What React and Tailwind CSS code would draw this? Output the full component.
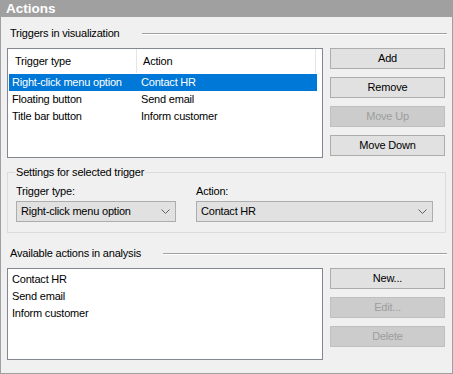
import React from "react";

function Btn({ children, disabled }) {
  return (
    <div
      className={
        "h-[21px] flex items-center justify-center border " +
        (disabled
          ? "bg-[#cccccc] border-[#bfbfbf] text-[#9d9d9d]"
          : "bg-[#e1e1e1] border-[#adadad] text-black")
      }
    >
      {children}
    </div>
  );
}

function SectionHeader({ children }) {
  return (
    <div className="h-[15px] flex items-center">
      <span className="pl-[3px] leading-[15px] whitespace-nowrap">{children}</span>
      <div className="flex-1 ml-[22px] h-[2px] border-t border-[#a0a0a0] border-b border-b-white"></div>
    </div>
  );
}

function Chevron() {
  return (
    <svg width="9" height="6" viewBox="0 0 9 6" className="shrink-0">
      <path d="M0.5 0.5 L4.5 4.5 L8.5 0.5" fill="none" stroke="#606060" strokeWidth="1" />
    </svg>
  );
}

function Combo({ value, width }) {
  return (
    <div
      className={
        "h-[21px] flex items-center justify-between border border-[#adadad] bg-[#e1e1e1] pl-[4px] pr-[5px] " +
        width
      }
    >
      <span className="whitespace-nowrap">{value}</span>
      <Chevron />
    </div>
  );
}

export default function App() {
  const rows = [
    ["Right-click menu option", "Contact HR", true],
    ["Floating button", "Send email", false],
    ["Title bar button", "Inform customer", false],
  ];
  return (
    <div className="w-[453px] h-[374px] bg-[#f0f0f0] border-x border-b border-[#a0a0a0] flex flex-col text-[11px] leading-[15px] tracking-[-0.2px] text-black font-['Liberation_Sans',Arial,sans-serif] overflow-hidden">
      <div className="h-[17px] bg-[#a0a0a0] text-white font-bold text-[13.5px] tracking-normal leading-[17px] pl-[5px] -mx-px">
        <span className="pl-px">Actions</span>
      </div>
      <div className="pl-[6px] pr-[5px] flex flex-col">
        <div className="mt-[9px]">
          <SectionHeader>Triggers in visualization</SectionHeader>
        </div>
        <div className="mt-[7px] flex gap-[7px]">
          <div className="w-[316px] h-[110px] border border-[#828790] bg-white flex flex-col">
            <div className="h-[25px] flex items-start">
              <div className="w-[129px] h-[24px] pl-[7px] flex items-center border-r border-[#e5e5e5]">
                Trigger type
              </div>
              <div className="w-[179px] h-[24px] pl-[6px] flex items-center border-r border-[#e5e5e5]">
                Action
              </div>
            </div>
            <div className="px-px flex flex-col">
              {rows.map(([a, b, sel]) => (
                <div
                  key={a}
                  className={
                    "w-[308px] h-[17px] flex items-center " +
                    (sel ? "bg-[#0078d7] text-white" : "")
                  }
                >
                  <div className="w-[129px] pl-[3px] whitespace-nowrap">{a}</div>
                  <div className="pl-[3px] whitespace-nowrap">{b}</div>
                </div>
              ))}
            </div>
          </div>
          <div className="w-[115px] flex flex-col gap-[8px]">
            <Btn>Add</Btn>
            <Btn>Remove</Btn>
            <Btn disabled>Move Up</Btn>
            <Btn>Move Down</Btn>
          </div>
        </div>

        <fieldset className="mt-[7px] border border-[#dcdcdc] w-[439px]">
          <legend className="ml-[7px] px-px leading-[15px]">Settings for selected trigger</legend>
          <div className="pt-[4px] pb-[10px] pl-[8px] flex gap-[20px]">
            <div className="flex flex-col w-[160px]">
              <div className="h-[15px] mb-[2px]">Trigger type:</div>
              <Combo value="Right-click menu option" width="w-[160px]" />
            </div>
            <div className="flex flex-col w-[237px]">
              <div className="h-[15px] mb-[2px]">Action:</div>
              <Combo value="Contact HR" width="w-[237px]" />
            </div>
          </div>
        </fieldset>

        <div className="mt-[13px]">
          <SectionHeader>Available actions in analysis</SectionHeader>
        </div>
        <div className="mt-[7px] flex gap-[7px]">
          <div className="w-[316px] h-[92px] border border-[#828790] bg-white pt-[2px] flex flex-col">
            {["Contact HR", "Send email", "Inform customer"].map((t) => (
              <div key={t} className="h-[17px] flex items-center pl-[4px] whitespace-nowrap">
                {t}
              </div>
            ))}
          </div>
          <div className="w-[115px] flex flex-col gap-[8px]">
            <Btn>New...</Btn>
            <Btn disabled>Edit...</Btn>
            <Btn disabled>Delete</Btn>
          </div>
        </div>
      </div>
    </div>
  );
}
